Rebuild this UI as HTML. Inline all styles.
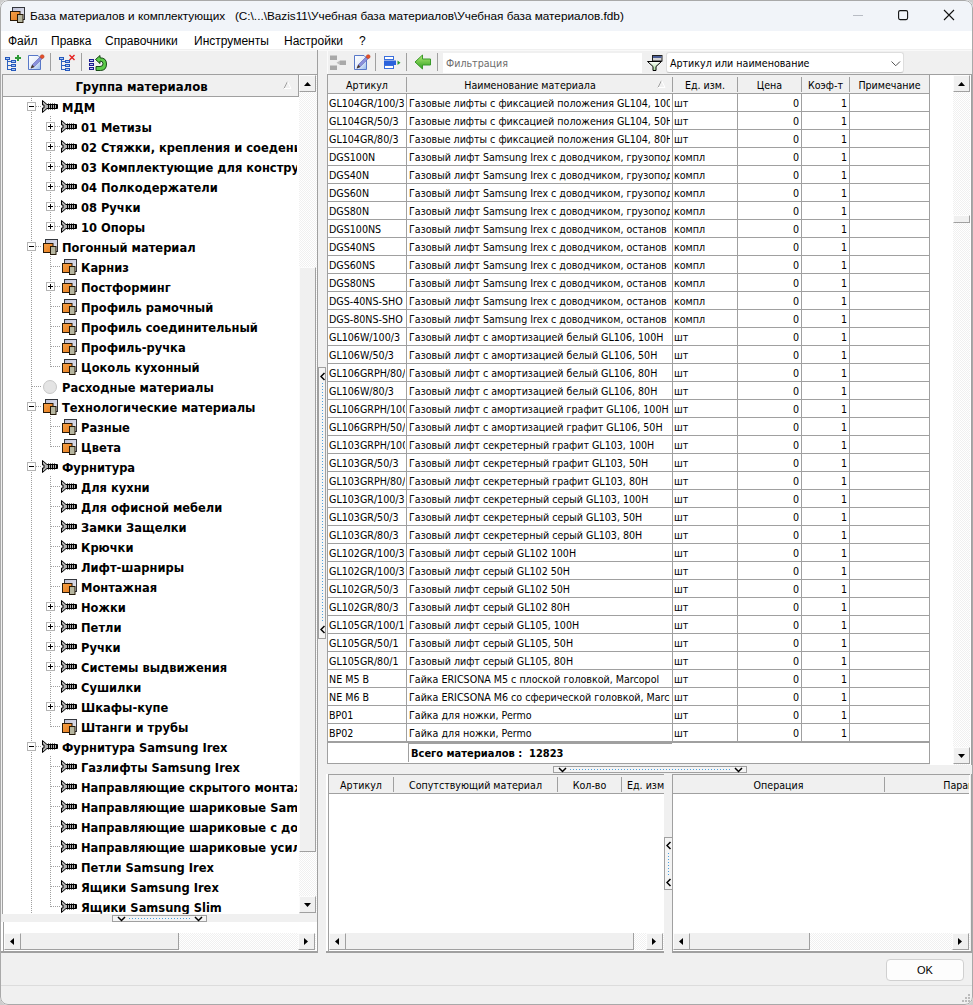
<!DOCTYPE html>
<html lang="ru"><head><meta charset="utf-8"><title>База материалов и комплектующих</title>
<style>
html,body{margin:0;padding:0}
body{width:973px;height:1005px;position:relative;overflow:hidden;background:#cdcdcd;font-family:"Liberation Sans",sans-serif;font-size:11px;color:#000}
.tah,.hdr,.grid{font-family:"DejaVu Sans Condensed","Liberation Sans",sans-serif;font-size:10.6px}
div,span,i,b,u,s,svg{position:absolute;box-sizing:border-box;font-style:normal;text-decoration:none;font-weight:normal}
.win{left:0;top:0;width:973px;height:1005px;background:#f0f0f0;border-radius:8px;overflow:hidden}
.winb{left:0;top:0;width:973px;height:1005px;border:1px solid #a9a9a9;border-radius:8px;pointer-events:none}
.title{left:0;top:0;width:973px;height:31px;background:#f1f4f9}
.title .cap{left:30px;top:8px;font-size:11.75px;line-height:16px;white-space:pre;color:#000}
.menu{left:0;top:31px;width:973px;height:18px;background:#fff}
.menu span{top:2px;font-size:12px;line-height:16px;white-space:nowrap}
.ln{background:#a0a0a0}
.sb{background:repeating-conic-gradient(#fff 0 25%,#f0f0f0 0 50%) 0 0/2px 2px}
.btn{background:#f0f0f0;border-right:1px solid #a0a0a0;border-bottom:1px solid #a0a0a0;border-left:1px solid #fcfcfc;border-top:1px solid #fcfcfc}
.thumb{background:#f0f0f0;border-right:1px solid #a0a0a0;border-bottom:1px solid #a0a0a0}
.ar{background:#000}
.ar.up{width:7px;height:4px;clip-path:polygon(50% 0,100% 100%,0 100%)}
.ar.dn{width:7px;height:4px;clip-path:polygon(0 0,100% 0,50% 100%)}
.ar.lf{width:4px;height:7px;clip-path:polygon(100% 0,100% 100%,0 50%)}
.ar.rt{width:4px;height:7px;clip-path:polygon(0 0,100% 50%,0 100%)}
.hdr{background:#f0f0f0;line-height:13px;white-space:nowrap;text-align:center}
.tsep{width:1px;height:18px;background:#a0a0a0;top:53px}
/* tree */
.tree{left:3px;top:97px;width:294px;height:817px;background:#fff;overflow:hidden}
.tree .tx{font-family:"DejaVu Sans Condensed","Liberation Sans",sans-serif;font-weight:bold;font-size:12.75px;line-height:20px;height:20px;white-space:nowrap;padding-top:1px}
.tree .vl{width:1px;background:repeating-linear-gradient(to bottom,#a0a0a0 0 1px,transparent 1px 2px)}
.tree .hl{height:1px;background:repeating-linear-gradient(to right,#a0a0a0 0 1px,transparent 1px 2px)}
.tree .ex{width:9px;height:9px;border:1px solid #b4b4b4;background:#fff}
.tree .ex u{left:1px;top:3px;width:5px;height:1px;background:#000}
.tree .ex s{left:3px;top:1px;width:1px;height:5px;background:#000}
/* grid */
.grid{left:328px;top:94px;width:602px;height:648px;background:#fff;overflow:hidden}
.grid .r{left:0;width:602px;height:18px;border-bottom:1px solid #a0a0a0;line-height:17px;white-space:nowrap}
.grid .r span{top:0;height:17px;overflow:hidden;padding-top:1px}
.grid .v{top:0;width:1px;height:648px;background:#a0a0a0}
.c1{left:1px;width:76px}
.c2{left:81px;width:261px}
.c3{left:346px;width:62px}
.c4{left:410px;width:61px;text-align:right}
.c5{left:474px;width:45px;text-align:right}
.c6{left:522px;width:79px}

</style></head>
<body>
<svg width="0" height="0" style="position:absolute"><defs>
<linearGradient id="gb" x1="0" y1="0" x2="1" y2="1"><stop offset="0" stop-color="#b9bdd6"/><stop offset="1" stop-color="#ececf2"/></linearGradient>
<linearGradient id="go" x1="0" y1="0" x2="1" y2="1"><stop offset="0" stop-color="#f6a24a"/><stop offset="1" stop-color="#e47a1c"/></linearGradient>
<symbol id="box" viewBox="0 0 16 16"><rect x="2.5" y="0.5" width="12" height="12" fill="url(#gb)" stroke="#33363c"/><rect x="0.5" y="4.5" width="9.5" height="9" fill="url(#go)" stroke="#2a1a08"/><rect x="7.5" y="7.5" width="5.5" height="8" fill="#b6b6a0" stroke="#241808"/></symbol>
<symbol id="screw" viewBox="0 0 16 13"><path d="M0.5 0.5 L5 4.5 H15.5 V8.5 H5 L0.5 12.5 V8 H2 V5 H0.5 Z" fill="#b0b0b0" stroke="#000" stroke-width="1"/><path d="M6.5 3.5 V9.5 M8.5 3.5 V9.5 M10.5 3.5 V9.5 M12.5 3.5 V9.5 M14.5 4 V9" stroke="#000" stroke-width="1"/></symbol>
<symbol id="circ" viewBox="0 0 16 16"><circle cx="8" cy="8" r="6.5" fill="#e4e4e4" stroke="#c8c8c8"/></symbol>

<linearGradient id="gpg" x1="0" y1="0" x2="1" y2="1"><stop offset="0" stop-color="#ffffff"/><stop offset="0.55" stop-color="#e6eefa"/><stop offset="1" stop-color="#8fb6ea"/></linearGradient>
<linearGradient id="ggr" x1="0" y1="0" x2="0" y2="1"><stop offset="0" stop-color="#b4ec78"/><stop offset="1" stop-color="#2ea01e"/></linearGradient>
<linearGradient id="gfn" x1="0" y1="0" x2="0" y2="1"><stop offset="0" stop-color="#ffffff"/><stop offset="1" stop-color="#a8dc98"/></linearGradient>
<symbol id="node" viewBox="0 0 6 3"><rect x="0.5" y="0.5" width="5" height="2" fill="#7fa8e8" stroke="#1f4fae"/></symbol>
<symbol id="tb-tree" viewBox="0 0 17 17"><path d="M2.5 5 V16 M2.5 7.5 H6 M2.5 11.5 H6 M2.5 15.5 H6" stroke="#2d62c0" fill="none"/><rect x="0" y="3" width="5" height="3" fill="#2558bc"/><rect x="1" y="4" width="3" height="1" fill="#a8c8f4"/><rect x="6" y="6" width="5" height="3" fill="#2558bc"/><rect x="7" y="7" width="3" height="1" fill="#a8c8f4"/><rect x="6" y="10" width="5" height="3" fill="#2558bc"/><rect x="7" y="11" width="3" height="1" fill="#a8c8f4"/><rect x="6" y="14" width="5" height="3" fill="#2558bc"/><rect x="7" y="15" width="3" height="1" fill="#a8c8f4"/></symbol>
<symbol id="tb-add" viewBox="0 0 17 17"><use href="#tb-tree"/><path d="M13 1 V7 M10 4 H16" stroke="#2c9a34" stroke-width="2"/></symbol>
<symbol id="tb-del" viewBox="0 0 17 17"><use href="#tb-tree" x="1"/><path d="M11.5 1 L16.5 6 M16.5 1 L11.5 6" stroke="#e42020" stroke-width="1.4"/></symbol>
<symbol id="tb-edit" viewBox="0 0 18 17"><path d="M1.5 1.5 H11 L13.5 4 V15.5 H1.5 Z" fill="url(#gpg)" stroke="#5878c8"/><path d="M4 14.2 L5.4 10.6 L13.4 2.6 L15.4 4.6 L7.4 12.6 Z" fill="#8890dc" stroke="#5a5aa8" stroke-width="0.5"/><path d="M3.6 14.6 L5.2 10.8 L7.4 13 Z" fill="#4a3a28"/><circle cx="15.2" cy="2.6" r="1.9" fill="#e8502a" stroke="#b03818" stroke-width="0.5"/></symbol>
<symbol id="tb-ref" viewBox="0 0 18 16"><rect x="0" y="4" width="5" height="3" fill="#1c1c90"/><rect x="1" y="5" width="3" height="1" fill="#c0c6f6"/><rect x="0" y="8" width="5" height="3" fill="#1c1c90"/><rect x="1" y="9" width="3" height="1" fill="#c0c6f6"/><rect x="0" y="12" width="5" height="3" fill="#1c1c90"/><rect x="1" y="13" width="3" height="1" fill="#c0c6f6"/><path d="M11 0.5 L6.5 4.5 L11 8.5 V6 Q14 6 14 8.8 Q14 11.5 11 11.5 H7 V15.5 H11.5 Q17.5 15.5 17.5 9 Q17.5 2.8 11 2.8 Z" fill="#5ccc4a" stroke="#083808" stroke-width="0.9"/></symbol>
<symbol id="tb-tree-gray" viewBox="0 0 17 17"><rect x="0" y="1.5" width="7" height="4.5" fill="#a9a9a9"/><rect x="0" y="11.5" width="7" height="4.5" fill="#a9a9a9"/><rect x="10" y="6.5" width="6" height="4.5" fill="#a9a9a9"/><path d="M10 6.5 V11 L6.5 8.75 Z" fill="#bdbdbd"/></symbol>
<symbol id="tb-move" viewBox="0 0 18 16"><rect x="1.5" y="1.5" width="9" height="3" fill="#fff" stroke="#3a6edc"/><rect x="1.5" y="10.5" width="9" height="3" fill="#fff" stroke="#3a6edc"/><rect x="1" y="5.5" width="12" height="4.5" fill="#2a62dc"/><path d="M14.5 5.5 L17.5 7.75 L14.5 10 Z" fill="#2c9a34"/></symbol>
<symbol id="tb-back" viewBox="0 0 18 17"><path d="M1 8 L8.5 1 V5 H16.5 V11 H8.5 V15 Z" fill="url(#ggr)" stroke="#3a9a2a"/></symbol>
<symbol id="tb-filter" viewBox="0 0 18 18"><rect x="6.5" y="1.5" width="9.5" height="5.5" fill="#d4d4d4" stroke="#202020"/><rect x="7" y="2" width="8.5" height="2" fill="#4a5c94"/><path d="M1.5 7.5 H15.5 L10 12.5 V16.5 H7 V12.5 Z" fill="url(#gfn)" stroke="#000"/></symbol>
</defs></svg>
<div class="win">
<div class="title">
<svg style="left:10px;top:7px" width="16" height="16"><use href="#box"/></svg>
<span class="cap">База материалов и комплектующих   (C:\...\Bazis11\Учебная база материалов\Учебная база материалов.fdb)</span>
<svg style="left:852px;top:9px" width="12" height="12"><path d="M1 6.5H11" stroke="#b8bcc4" stroke-width="1"/></svg>
<svg style="left:897px;top:9px" width="12" height="12"><rect x="1.6" y="1.6" width="9" height="9" rx="1.5" fill="none" stroke="#111" stroke-width="1.1"/></svg>
<svg style="left:943px;top:9px" width="12" height="12"><path d="M1 1L11 11M11 1L1 11" stroke="#111" stroke-width="1.1"/></svg>
</div>
<div class="menu"><span style="left:8px">Файл</span><span style="left:51px">Правка</span><span style="left:105px">Справочники</span><span style="left:194px">Инструменты</span><span style="left:284px">Настройки</span><span style="left:359px">?</span></div>

<i style="left:0;top:50px;width:973px;height:1px;background:#f9f9f9"></i>
<!-- left toolbar -->
<svg style="left:5px;top:54px" width="17" height="17"><use href="#tb-add"/></svg>
<svg style="left:27px;top:54px" width="18" height="17"><use href="#tb-edit"/></svg>
<i class="tsep" style="left:50px"></i>
<svg style="left:58px;top:54px" width="17" height="17"><use href="#tb-del"/></svg>
<i class="tsep" style="left:81px"></i>
<svg style="left:89px;top:55px" width="18" height="16"><use href="#tb-ref"/></svg>

<!-- left panel frame -->
<i class="ln" style="left:2px;top:74px;width:316px;height:1px"></i>
<i class="ln" style="left:2px;top:74px;width:1px;height:840px"></i>
<i class="ln" style="left:317px;top:50px;width:1px;height:903px"></i>
<i style="left:1px;top:922px;width:2px;height:29px;background:#fff"></i>
<i class="ln" style="left:3px;top:922px;width:1px;height:30px"></i>
<i class="ln" style="left:1px;top:951px;width:317px;height:2px"></i>
<div class="hdr" style="left:3px;top:75px;width:296px;height:22px;border-right:1px solid #a0a0a0;border-bottom:1px solid #a0a0a0;font-family:'DejaVu Sans Condensed','Liberation Sans',sans-serif;font-weight:bold;font-size:13px;line-height:23px;padding-right:18px">Группа материалов</div>
<svg style="left:283px;top:81px" width="9" height="9"><path d="M1 7.5 L4.5 0.5" stroke="#a0a0a0" fill="none"/><path d="M4.5 0.5 L8 7.5 L1 7.5" stroke="#fff" fill="none"/></svg>
<i style="left:297px;top:97px;width:2px;height:817px;background:#fff"></i>
<!-- tree vscroll -->
<div class="sb" style="left:299px;top:75px;width:18px;height:838px"></div>
<div class="btn" style="left:299px;top:75px;width:17px;height:17px"><i class="ar up" style="left:4px;top:6px"></i></div>
<div class="thumb" style="left:299px;top:267px;width:17px;height:585px;border-left:1px solid #fcfcfc;border-top:1px solid #fcfcfc"></div>
<div class="btn" style="left:299px;top:896px;width:17px;height:17px"><i class="ar dn" style="left:4px;top:6px"></i></div>
<!-- left h-splitter handle -->
<div style="left:112px;top:915px;width:95px;height:7px;border:1px solid #a0a0a0;background:#f4f4f4"><svg style="left:4px;top:0px" width="9" height="6"><path d="M1 1L4.5 4.5L8 1" stroke="#000" stroke-width="1.5" fill="none"/></svg><i style="left:16px;top:2px;width:62px;height:1px;background:repeating-linear-gradient(to right,#4aa0e0 0 1px,transparent 1px 3px)"></i><svg style="left:81px;top:0px" width="9" height="6"><path d="M1 1L4.5 4.5L8 1" stroke="#000" stroke-width="1.5" fill="none"/></svg></div>
<div style="left:4px;top:922px;width:313px;height:29px;background:#fff"></div>
<!-- left hscroll -->
<div class="sb" style="left:4px;top:933px;width:312px;height:17px"></div>
<div class="btn" style="left:4px;top:933px;width:17px;height:17px"><i class="ar lf" style="left:5px;top:4px"></i></div>
<div class="thumb" style="left:21px;top:933px;width:158px;height:17px"></div>
<div class="btn" style="left:298px;top:933px;width:17px;height:17px"><i class="ar rt" style="left:5px;top:4px"></i></div>

<!-- v splitter between panels -->
<div style="left:318px;top:367px;width:8px;height:272px;border:1px solid #a0a0a0;background:#f4f4f4"><svg style="left:1px;top:4px" width="6" height="9"><path d="M4.5 1L1 4.5L4.5 8" stroke="#000" stroke-width="1.5" fill="none"/></svg><i style="left:3px;top:15px;width:1px;height:240px;background:repeating-linear-gradient(to bottom,#4aa0e0 0 1px,transparent 1px 3px)"></i><svg style="left:1px;top:257px" width="6" height="9"><path d="M4.5 1L1 4.5L4.5 8" stroke="#000" stroke-width="1.5" fill="none"/></svg></div>

<!-- right toolbar -->
<i style="left:327px;top:51px;width:1px;height:23px;background:#fbfbfb"></i>
<svg style="left:330px;top:54px" width="17" height="17"><use href="#tb-tree-gray"/></svg>
<svg style="left:353px;top:54px" width="18" height="17"><use href="#tb-edit"/></svg>
<i class="tsep" style="left:375px"></i>
<svg style="left:383px;top:55px" width="18" height="16"><use href="#tb-move"/></svg>
<i class="tsep" style="left:406px"></i>
<svg style="left:414px;top:54px" width="18" height="17"><use href="#tb-back"/></svg>
<i class="tsep" style="left:437px"></i>
<div style="left:443px;top:53px;width:199px;height:20px;background:#fff;line-height:20px;padding-left:3px;color:#6d6d6d" class="tah">Фильтрация</div>
<svg style="left:646px;top:54px" width="18" height="18"><use href="#tb-filter"/></svg>
<div style="left:666px;top:52px;width:238px;height:21px;background:#fff;border:1px solid #dedede;border-bottom-color:#c4c4c4;border-radius:3px;line-height:20px;padding-left:3px" class="tah">Артикул или наименование<svg style="left:224px;top:8px" width="10" height="6"><path d="M0.5 0.5L4.75 4.75L9 0.5" stroke="#555" stroke-width="1" fill="none"/></svg></div>

<!-- right panel frame -->
<i class="ln" style="left:327px;top:74px;width:645px;height:1px"></i>
<i class="ln" style="left:327px;top:74px;width:1px;height:690px"></i>
<i class="ln" style="left:971px;top:74px;width:1px;height:691px"></i>
<div style="left:328px;top:75px;width:643px;height:690px;background:#fff"></div>
<i class="ln" style="left:327px;top:763px;width:603px;height:1px"></i><i style="left:327px;top:764px;width:603px;height:1px;background:#f0f0f0"></i>
<!-- grid header -->
<div class="hdr" style="left:328px;top:75px;width:602px;height:19px;border-bottom:1px solid #a0a0a0;border-right:1px solid #a0a0a0">
<span style="left:0;width:78px;top:4px">Артикул</span><i class="ln" style="left:78px;top:2px;width:1px;height:15px"></i>
<span style="left:79px;width:246px;top:4px">Наименование материала</span><i class="ln" style="left:344px;top:2px;width:1px;height:15px"></i>
<span style="left:345px;width:64px;top:4px">Ед. изм.</span><i class="ln" style="left:409px;top:2px;width:1px;height:15px"></i>
<span style="left:410px;width:63px;top:4px">Цена</span><i class="ln" style="left:473px;top:2px;width:1px;height:15px"></i>
<span style="left:474px;width:47px;top:4px">Коэф-т</span><i class="ln" style="left:521px;top:2px;width:1px;height:15px"></i>
<span style="left:522px;width:79px;top:4px">Примечание</span>
<svg style="left:329px;top:5px" width="9" height="9"><path d="M1 7.5 L4.5 0.5" stroke="#a0a0a0" fill="none"/><path d="M4.5 0.5 L8 7.5 L1 7.5" stroke="#fff" fill="none"/></svg>
</div>
<!-- grid vscroll -->
<div class="sb" style="left:953px;top:75px;width:17px;height:690px"></div>
<div class="btn" style="left:953px;top:75px;width:17px;height:17px"><i class="ar up" style="left:4px;top:6px"></i></div>
<div class="thumb" style="left:953px;top:215px;width:17px;height:8px;border-left:1px solid #fcfcfc;border-top:1px solid #fcfcfc"></div>
<div class="btn" style="left:953px;top:747px;width:17px;height:17px"><i class="ar dn" style="left:4px;top:6px"></i></div>
<!-- footer -->
<i class="ln" style="left:328px;top:742px;width:602px;height:1px"></i>
<i class="ln" style="left:929px;top:742px;width:1px;height:21px"></i>
<i class="ln" style="left:408px;top:743px;width:264px;height:1px"></i>
<i class="ln" style="left:408px;top:743px;width:1px;height:19px"></i>
<span style="left:411px;top:747px;font-weight:bold;line-height:14px;white-space:pre;font-size:11px" class="tah">Всего материалов :  12823</span>

<!-- middle h-splitter handle -->
<div style="left:553px;top:766px;width:194px;height:7px;border:1px solid #a0a0a0;background:#f4f4f4"><svg style="left:4px;top:0px" width="9" height="6"><path d="M1 1L4.5 4.5L8 1" stroke="#000" stroke-width="1.5" fill="none"/></svg><i style="left:16px;top:2px;width:160px;height:1px;background:repeating-linear-gradient(to right,#4aa0e0 0 1px,transparent 1px 3px)"></i><svg style="left:180px;top:0px" width="9" height="6"><path d="M1 1L4.5 4.5L8 1" stroke="#000" stroke-width="1.5" fill="none"/></svg></div>

<!-- bottom-left grid -->
<i style="left:326px;top:774px;width:2px;height:177px;background:#fff"></i>
<i class="ln" style="left:328px;top:774px;width:336px;height:1px"></i>
<i class="ln" style="left:328px;top:774px;width:1px;height:178px"></i>
<i class="ln" style="left:326px;top:951px;width:338px;height:2px"></i>
<div style="left:329px;top:775px;width:335px;height:176px;background:#fff"></div>
<div class="hdr" style="left:329px;top:775px;width:335px;height:19px;overflow:hidden;border-bottom:1px solid #a0a0a0">
<span style="left:0;width:64px;top:4px">Артикул</span><i class="ln" style="left:64px;top:2px;width:1px;height:15px"></i>
<span style="left:65px;width:163px;top:4px">Сопутствующий материал</span><i class="ln" style="left:228px;top:2px;width:1px;height:15px"></i>
<span style="left:229px;width:63px;top:4px">Кол-во</span><i class="ln" style="left:292px;top:2px;width:1px;height:15px"></i>
<span style="left:298px;top:4px">Ед. изм.</span>
</div>
<div class="sb" style="left:329px;top:933px;width:335px;height:17px"></div>
<div class="btn" style="left:329px;top:933px;width:17px;height:17px"><i class="ar lf" style="left:5px;top:4px"></i></div>
<div class="thumb" style="left:346px;top:933px;width:288px;height:17px"></div>
<div class="btn" style="left:646px;top:933px;width:17px;height:17px"><i class="ar rt" style="left:5px;top:4px"></i></div>
<!-- bottom v-splitter handle -->
<div style="left:664px;top:837px;width:8px;height:53px;border:1px solid #a0a0a0;border-right:0;background:#f4f4f4"><svg style="left:1px;top:3px" width="6" height="9"><path d="M4.5 1L1 4.5L4.5 8" stroke="#000" stroke-width="1.5" fill="none"/></svg><i style="left:3px;top:15px;width:1px;height:22px;background:repeating-linear-gradient(to bottom,#4aa0e0 0 1px,transparent 1px 3px)"></i><svg style="left:1px;top:40px" width="6" height="9"><path d="M4.5 1L1 4.5L4.5 8" stroke="#000" stroke-width="1.5" fill="none"/></svg></div>
<!-- bottom-right grid -->
<i class="ln" style="left:672px;top:774px;width:298px;height:1px"></i>
<i class="ln" style="left:672px;top:774px;width:1px;height:178px"></i>
<i class="ln" style="left:971px;top:774px;width:1px;height:178px"></i>
<i class="ln" style="left:672px;top:951px;width:300px;height:2px"></i>
<div style="left:673px;top:775px;width:297px;height:176px;background:#fff"></div>
<div class="hdr" style="left:673px;top:775px;width:296px;height:19px;overflow:hidden;border-bottom:1px solid #a0a0a0">
<span style="left:0;width:211px;top:4px">Операция</span><i class="ln" style="left:211px;top:2px;width:1px;height:15px"></i>
<span style="left:210px;width:170px;top:4px">Параметр</span>
</div>
<div class="sb" style="left:673px;top:933px;width:297px;height:17px"></div>
<div class="btn" style="left:673px;top:933px;width:17px;height:17px"><i class="ar lf" style="left:5px;top:4px"></i></div>
<div class="thumb" style="left:690px;top:933px;width:120px;height:17px"></div>
<div class="btn" style="left:952px;top:933px;width:17px;height:17px"><i class="ar rt" style="left:5px;top:4px"></i></div>

<!-- bottom bar -->
<div style="left:886px;top:959px;width:78px;height:22px;background:#fdfdfd;border:1px solid #d0d0d0;border-radius:4px;text-align:center;font-size:11px;line-height:20px">OK</div>
<i style="left:0;top:985px;width:973px;height:1px;background:#dcdcdc"></i>
<svg style="left:961px;top:993px" width="10" height="10"><rect x="7" y="1" width="2" height="2" fill="#bcbcbc"/><rect x="4" y="4" width="2" height="2" fill="#bcbcbc"/><rect x="7" y="4" width="2" height="2" fill="#bcbcbc"/><rect x="1" y="7" width="2" height="2" fill="#bcbcbc"/><rect x="4" y="7" width="2" height="2" fill="#bcbcbc"/><rect x="7" y="7" width="2" height="2" fill="#bcbcbc"/></svg>
<div class="winb"></div>
</div>
<div class="tree">
<i class="vl" style="left:28px;top:1px;height:816px"></i>
<i class="vl" style="left:47px;top:19px;height:111px"></i>
<i class="vl" style="left:47px;top:159px;height:111px"></i>
<i class="vl" style="left:47px;top:319px;height:31px"></i>
<i class="vl" style="left:47px;top:379px;height:251px"></i>
<i class="vl" style="left:47px;top:659px;height:151px"></i>
<i class="hl" style="left:33px;top:9px;width:5px"></i>
<b class="ex" style="left:24px;top:5px"><u></u></b>
<svg class="ic" style="left:39px;top:3px" width="16" height="13"><use href="#screw"/></svg>
<span class="tx" style="left:59px;top:0px">МДМ</span>
<i class="hl" style="left:52px;top:29px;width:5px"></i>
<b class="ex" style="left:43px;top:25px"><u></u><s></s></b>
<svg class="ic" style="left:58px;top:23px" width="16" height="13"><use href="#screw"/></svg>
<span class="tx" style="left:78px;top:20px">01 Метизы</span>
<i class="hl" style="left:52px;top:49px;width:5px"></i>
<b class="ex" style="left:43px;top:45px"><u></u><s></s></b>
<svg class="ic" style="left:58px;top:43px" width="16" height="13"><use href="#screw"/></svg>
<span class="tx" style="left:78px;top:40px">02 Стяжки, крепления и соеденители</span>
<i class="hl" style="left:52px;top:69px;width:5px"></i>
<b class="ex" style="left:43px;top:65px"><u></u><s></s></b>
<svg class="ic" style="left:58px;top:63px" width="16" height="13"><use href="#screw"/></svg>
<span class="tx" style="left:78px;top:60px">03 Комплектующие для конструкций</span>
<i class="hl" style="left:52px;top:89px;width:5px"></i>
<b class="ex" style="left:43px;top:85px"><u></u><s></s></b>
<svg class="ic" style="left:58px;top:83px" width="16" height="13"><use href="#screw"/></svg>
<span class="tx" style="left:78px;top:80px">04 Полкодержатели</span>
<i class="hl" style="left:52px;top:109px;width:5px"></i>
<b class="ex" style="left:43px;top:105px"><u></u><s></s></b>
<svg class="ic" style="left:58px;top:103px" width="16" height="13"><use href="#screw"/></svg>
<span class="tx" style="left:78px;top:100px">08 Ручки</span>
<i class="hl" style="left:52px;top:129px;width:5px"></i>
<b class="ex" style="left:43px;top:125px"><u></u><s></s></b>
<svg class="ic" style="left:58px;top:123px" width="16" height="13"><use href="#screw"/></svg>
<span class="tx" style="left:78px;top:120px">10 Опоры</span>
<i class="hl" style="left:33px;top:149px;width:5px"></i>
<b class="ex" style="left:24px;top:145px"><u></u></b>
<svg class="ic" style="left:40px;top:142px" width="16" height="16"><use href="#box"/></svg>
<span class="tx" style="left:59px;top:140px">Погонный материал</span>
<i class="hl" style="left:48px;top:169px;width:10px"></i>
<svg class="ic" style="left:59px;top:162px" width="16" height="16"><use href="#box"/></svg>
<span class="tx" style="left:78px;top:160px">Карниз</span>
<i class="hl" style="left:52px;top:189px;width:5px"></i>
<b class="ex" style="left:43px;top:185px"><u></u><s></s></b>
<svg class="ic" style="left:59px;top:182px" width="16" height="16"><use href="#box"/></svg>
<span class="tx" style="left:78px;top:180px">Постформинг</span>
<i class="hl" style="left:48px;top:209px;width:10px"></i>
<svg class="ic" style="left:59px;top:202px" width="16" height="16"><use href="#box"/></svg>
<span class="tx" style="left:78px;top:200px">Профиль рамочный</span>
<i class="hl" style="left:48px;top:229px;width:10px"></i>
<svg class="ic" style="left:59px;top:222px" width="16" height="16"><use href="#box"/></svg>
<span class="tx" style="left:78px;top:220px">Профиль соединительный</span>
<i class="hl" style="left:48px;top:249px;width:10px"></i>
<svg class="ic" style="left:59px;top:242px" width="16" height="16"><use href="#box"/></svg>
<span class="tx" style="left:78px;top:240px">Профиль-ручка</span>
<i class="hl" style="left:48px;top:269px;width:10px"></i>
<svg class="ic" style="left:59px;top:262px" width="16" height="16"><use href="#box"/></svg>
<span class="tx" style="left:78px;top:260px">Цоколь кухонный</span>
<i class="hl" style="left:29px;top:289px;width:10px"></i>
<svg class="ic" style="left:39px;top:282px" width="16" height="16"><use href="#circ"/></svg>
<span class="tx" style="left:59px;top:280px">Расходные материалы</span>
<i class="hl" style="left:33px;top:309px;width:5px"></i>
<b class="ex" style="left:24px;top:305px"><u></u></b>
<svg class="ic" style="left:40px;top:302px" width="16" height="16"><use href="#box"/></svg>
<span class="tx" style="left:59px;top:300px">Технологические материалы</span>
<i class="hl" style="left:48px;top:329px;width:10px"></i>
<svg class="ic" style="left:59px;top:322px" width="16" height="16"><use href="#box"/></svg>
<span class="tx" style="left:78px;top:320px">Разные</span>
<i class="hl" style="left:48px;top:349px;width:10px"></i>
<svg class="ic" style="left:59px;top:342px" width="16" height="16"><use href="#box"/></svg>
<span class="tx" style="left:78px;top:340px">Цвета</span>
<i class="hl" style="left:33px;top:369px;width:5px"></i>
<b class="ex" style="left:24px;top:365px"><u></u></b>
<svg class="ic" style="left:39px;top:363px" width="16" height="13"><use href="#screw"/></svg>
<span class="tx" style="left:59px;top:360px">Фурнитура</span>
<i class="hl" style="left:48px;top:389px;width:10px"></i>
<svg class="ic" style="left:58px;top:383px" width="16" height="13"><use href="#screw"/></svg>
<span class="tx" style="left:78px;top:380px">Для кухни</span>
<i class="hl" style="left:48px;top:409px;width:10px"></i>
<svg class="ic" style="left:58px;top:403px" width="16" height="13"><use href="#screw"/></svg>
<span class="tx" style="left:78px;top:400px">Для офисной мебели</span>
<i class="hl" style="left:48px;top:429px;width:10px"></i>
<svg class="ic" style="left:58px;top:423px" width="16" height="13"><use href="#screw"/></svg>
<span class="tx" style="left:78px;top:420px">Замки Защелки</span>
<i class="hl" style="left:48px;top:449px;width:10px"></i>
<svg class="ic" style="left:58px;top:443px" width="16" height="13"><use href="#screw"/></svg>
<span class="tx" style="left:78px;top:440px">Крючки</span>
<i class="hl" style="left:48px;top:469px;width:10px"></i>
<svg class="ic" style="left:58px;top:463px" width="16" height="13"><use href="#screw"/></svg>
<span class="tx" style="left:78px;top:460px">Лифт-шарниры</span>
<i class="hl" style="left:48px;top:489px;width:10px"></i>
<svg class="ic" style="left:59px;top:482px" width="16" height="16"><use href="#box"/></svg>
<span class="tx" style="left:78px;top:480px">Монтажная</span>
<i class="hl" style="left:52px;top:509px;width:5px"></i>
<b class="ex" style="left:43px;top:505px"><u></u><s></s></b>
<svg class="ic" style="left:58px;top:503px" width="16" height="13"><use href="#screw"/></svg>
<span class="tx" style="left:78px;top:500px">Ножки</span>
<i class="hl" style="left:52px;top:529px;width:5px"></i>
<b class="ex" style="left:43px;top:525px"><u></u><s></s></b>
<svg class="ic" style="left:58px;top:523px" width="16" height="13"><use href="#screw"/></svg>
<span class="tx" style="left:78px;top:520px">Петли</span>
<i class="hl" style="left:52px;top:549px;width:5px"></i>
<b class="ex" style="left:43px;top:545px"><u></u><s></s></b>
<svg class="ic" style="left:58px;top:543px" width="16" height="13"><use href="#screw"/></svg>
<span class="tx" style="left:78px;top:540px">Ручки</span>
<i class="hl" style="left:52px;top:569px;width:5px"></i>
<b class="ex" style="left:43px;top:565px"><u></u><s></s></b>
<svg class="ic" style="left:58px;top:563px" width="16" height="13"><use href="#screw"/></svg>
<span class="tx" style="left:78px;top:560px">Системы выдвижения</span>
<i class="hl" style="left:48px;top:589px;width:10px"></i>
<svg class="ic" style="left:58px;top:583px" width="16" height="13"><use href="#screw"/></svg>
<span class="tx" style="left:78px;top:580px">Сушилки</span>
<i class="hl" style="left:52px;top:609px;width:5px"></i>
<b class="ex" style="left:43px;top:605px"><u></u><s></s></b>
<svg class="ic" style="left:58px;top:603px" width="16" height="13"><use href="#screw"/></svg>
<span class="tx" style="left:78px;top:600px">Шкафы-купе</span>
<i class="hl" style="left:48px;top:629px;width:10px"></i>
<svg class="ic" style="left:59px;top:622px" width="16" height="16"><use href="#box"/></svg>
<span class="tx" style="left:78px;top:620px">Штанги и трубы</span>
<i class="hl" style="left:33px;top:649px;width:5px"></i>
<b class="ex" style="left:24px;top:645px"><u></u></b>
<svg class="ic" style="left:39px;top:643px" width="16" height="13"><use href="#screw"/></svg>
<span class="tx" style="left:59px;top:640px">Фурнитура Samsung Irex</span>
<i class="hl" style="left:48px;top:669px;width:10px"></i>
<svg class="ic" style="left:58px;top:663px" width="16" height="13"><use href="#screw"/></svg>
<span class="tx" style="left:78px;top:660px">Газлифты Samsung Irex</span>
<i class="hl" style="left:48px;top:689px;width:10px"></i>
<svg class="ic" style="left:58px;top:683px" width="16" height="13"><use href="#screw"/></svg>
<span class="tx" style="left:78px;top:680px">Направляющие скрытого монтажа</span>
<i class="hl" style="left:48px;top:709px;width:10px"></i>
<svg class="ic" style="left:58px;top:703px" width="16" height="13"><use href="#screw"/></svg>
<span class="tx" style="left:78px;top:700px">Направляющие шариковые Samsung</span>
<i class="hl" style="left:48px;top:729px;width:10px"></i>
<svg class="ic" style="left:58px;top:723px" width="16" height="13"><use href="#screw"/></svg>
<span class="tx" style="left:78px;top:720px">Направляющие шариковые с доводчиком</span>
<i class="hl" style="left:48px;top:749px;width:10px"></i>
<svg class="ic" style="left:58px;top:743px" width="16" height="13"><use href="#screw"/></svg>
<span class="tx" style="left:78px;top:740px">Направляющие шариковые усиленные</span>
<i class="hl" style="left:48px;top:769px;width:10px"></i>
<svg class="ic" style="left:58px;top:763px" width="16" height="13"><use href="#screw"/></svg>
<span class="tx" style="left:78px;top:760px">Петли Samsung Irex</span>
<i class="hl" style="left:48px;top:789px;width:10px"></i>
<svg class="ic" style="left:58px;top:783px" width="16" height="13"><use href="#screw"/></svg>
<span class="tx" style="left:78px;top:780px">Ящики Samsung Irex</span>
<i class="hl" style="left:48px;top:809px;width:10px"></i>
<svg class="ic" style="left:58px;top:803px" width="16" height="13"><use href="#screw"/></svg>
<span class="tx" style="left:78px;top:800px">Ящики Samsung Slim</span>
</div><div class="grid">
<div class="r" style="top:0px"><span class="c1">GL104GR/100/3</span><span class="c2">Газовые лифты с фиксацией положения GL104, 100H</span><span class="c3">шт</span><span class="c4">0</span><span class="c5">1</span><span class="c6"></span></div>
<div class="r" style="top:18px"><span class="c1">GL104GR/50/3</span><span class="c2">Газовые лифты с фиксацией положения GL104, 50H</span><span class="c3">шт</span><span class="c4">0</span><span class="c5">1</span><span class="c6"></span></div>
<div class="r" style="top:36px"><span class="c1">GL104GR/80/3</span><span class="c2">Газовые лифты с фиксацией положения GL104, 80H</span><span class="c3">шт</span><span class="c4">0</span><span class="c5">1</span><span class="c6"></span></div>
<div class="r" style="top:54px"><span class="c1">DGS100N</span><span class="c2">Газовый лифт Samsung Irex с доводчиком, грузоподъемность</span><span class="c3">компл</span><span class="c4">0</span><span class="c5">1</span><span class="c6"></span></div>
<div class="r" style="top:72px"><span class="c1">DGS40N</span><span class="c2">Газовый лифт Samsung Irex с доводчиком, грузоподъемность</span><span class="c3">компл</span><span class="c4">0</span><span class="c5">1</span><span class="c6"></span></div>
<div class="r" style="top:90px"><span class="c1">DGS60N</span><span class="c2">Газовый лифт Samsung Irex с доводчиком, грузоподъемность</span><span class="c3">компл</span><span class="c4">0</span><span class="c5">1</span><span class="c6"></span></div>
<div class="r" style="top:108px"><span class="c1">DGS80N</span><span class="c2">Газовый лифт Samsung Irex с доводчиком, грузоподъемность</span><span class="c3">компл</span><span class="c4">0</span><span class="c5">1</span><span class="c6"></span></div>
<div class="r" style="top:126px"><span class="c1">DGS100NS</span><span class="c2">Газовый лифт Samsung Irex с доводчиком, останов</span><span class="c3">компл</span><span class="c4">0</span><span class="c5">1</span><span class="c6"></span></div>
<div class="r" style="top:144px"><span class="c1">DGS40NS</span><span class="c2">Газовый лифт Samsung Irex с доводчиком, останов</span><span class="c3">компл</span><span class="c4">0</span><span class="c5">1</span><span class="c6"></span></div>
<div class="r" style="top:162px"><span class="c1">DGS60NS</span><span class="c2">Газовый лифт Samsung Irex с доводчиком, останов</span><span class="c3">компл</span><span class="c4">0</span><span class="c5">1</span><span class="c6"></span></div>
<div class="r" style="top:180px"><span class="c1">DGS80NS</span><span class="c2">Газовый лифт Samsung Irex с доводчиком, останов</span><span class="c3">компл</span><span class="c4">0</span><span class="c5">1</span><span class="c6"></span></div>
<div class="r" style="top:198px"><span class="c1">DGS-40NS-SHO</span><span class="c2">Газовый лифт Samsung Irex с доводчиком, останов</span><span class="c3">компл</span><span class="c4">0</span><span class="c5">1</span><span class="c6"></span></div>
<div class="r" style="top:216px"><span class="c1">DGS-80NS-SHO</span><span class="c2">Газовый лифт Samsung Irex с доводчиком, останов</span><span class="c3">компл</span><span class="c4">0</span><span class="c5">1</span><span class="c6"></span></div>
<div class="r" style="top:234px"><span class="c1">GL106W/100/3</span><span class="c2">Газовый лифт с амортизацией белый GL106, 100H</span><span class="c3">шт</span><span class="c4">0</span><span class="c5">1</span><span class="c6"></span></div>
<div class="r" style="top:252px"><span class="c1">GL106W/50/3</span><span class="c2">Газовый лифт с амортизацией белый GL106, 50H</span><span class="c3">шт</span><span class="c4">0</span><span class="c5">1</span><span class="c6"></span></div>
<div class="r" style="top:270px"><span class="c1">GL106GRPH/80/3</span><span class="c2">Газовый лифт с амортизацией белый GL106, 80H</span><span class="c3">шт</span><span class="c4">0</span><span class="c5">1</span><span class="c6"></span></div>
<div class="r" style="top:288px"><span class="c1">GL106W/80/3</span><span class="c2">Газовый лифт с амортизацией белый GL106, 80H</span><span class="c3">шт</span><span class="c4">0</span><span class="c5">1</span><span class="c6"></span></div>
<div class="r" style="top:306px"><span class="c1">GL106GRPH/100/3</span><span class="c2">Газовый лифт с амортизацией графит GL106, 100H</span><span class="c3">шт</span><span class="c4">0</span><span class="c5">1</span><span class="c6"></span></div>
<div class="r" style="top:324px"><span class="c1">GL106GRPH/50/3</span><span class="c2">Газовый лифт с амортизацией графит GL106, 50H</span><span class="c3">шт</span><span class="c4">0</span><span class="c5">1</span><span class="c6"></span></div>
<div class="r" style="top:342px"><span class="c1">GL103GRPH/100/3</span><span class="c2">Газовый лифт секретерный графит GL103, 100H</span><span class="c3">шт</span><span class="c4">0</span><span class="c5">1</span><span class="c6"></span></div>
<div class="r" style="top:360px"><span class="c1">GL103GR/50/3</span><span class="c2">Газовый лифт секретерный графит GL103, 50H</span><span class="c3">шт</span><span class="c4">0</span><span class="c5">1</span><span class="c6"></span></div>
<div class="r" style="top:378px"><span class="c1">GL103GRPH/80/3</span><span class="c2">Газовый лифт секретерный графит GL103, 80H</span><span class="c3">шт</span><span class="c4">0</span><span class="c5">1</span><span class="c6"></span></div>
<div class="r" style="top:396px"><span class="c1">GL103GR/100/3</span><span class="c2">Газовый лифт секретерный серый GL103, 100H</span><span class="c3">шт</span><span class="c4">0</span><span class="c5">1</span><span class="c6"></span></div>
<div class="r" style="top:414px"><span class="c1">GL103GR/50/3</span><span class="c2">Газовый лифт секретерный серый GL103, 50H</span><span class="c3">шт</span><span class="c4">0</span><span class="c5">1</span><span class="c6"></span></div>
<div class="r" style="top:432px"><span class="c1">GL103GR/80/3</span><span class="c2">Газовый лифт секретерный серый GL103, 80H</span><span class="c3">шт</span><span class="c4">0</span><span class="c5">1</span><span class="c6"></span></div>
<div class="r" style="top:450px"><span class="c1">GL102GR/100/3</span><span class="c2">Газовый лифт серый GL102 100H</span><span class="c3">шт</span><span class="c4">0</span><span class="c5">1</span><span class="c6"></span></div>
<div class="r" style="top:468px"><span class="c1">GL102GR/100/3</span><span class="c2">Газовый лифт серый GL102 50H</span><span class="c3">шт</span><span class="c4">0</span><span class="c5">1</span><span class="c6"></span></div>
<div class="r" style="top:486px"><span class="c1">GL102GR/50/3</span><span class="c2">Газовый лифт серый GL102 50H</span><span class="c3">шт</span><span class="c4">0</span><span class="c5">1</span><span class="c6"></span></div>
<div class="r" style="top:504px"><span class="c1">GL102GR/80/3</span><span class="c2">Газовый лифт серый GL102 80H</span><span class="c3">шт</span><span class="c4">0</span><span class="c5">1</span><span class="c6"></span></div>
<div class="r" style="top:522px"><span class="c1">GL105GR/100/1</span><span class="c2">Газовый лифт серый GL105, 100H</span><span class="c3">шт</span><span class="c4">0</span><span class="c5">1</span><span class="c6"></span></div>
<div class="r" style="top:540px"><span class="c1">GL105GR/50/1</span><span class="c2">Газовый лифт серый GL105, 50H</span><span class="c3">шт</span><span class="c4">0</span><span class="c5">1</span><span class="c6"></span></div>
<div class="r" style="top:558px"><span class="c1">GL105GR/80/1</span><span class="c2">Газовый лифт серый GL105, 80H</span><span class="c3">шт</span><span class="c4">0</span><span class="c5">1</span><span class="c6"></span></div>
<div class="r" style="top:576px"><span class="c1">NE M5 B</span><span class="c2">Гайка ERICSONA M5 с плоской головкой, Marcopol</span><span class="c3">шт</span><span class="c4">0</span><span class="c5">1</span><span class="c6"></span></div>
<div class="r" style="top:594px"><span class="c1">NE M6 B</span><span class="c2">Гайка ERICSONA M6 со сферической головкой, Marcopol</span><span class="c3">шт</span><span class="c4">0</span><span class="c5">1</span><span class="c6"></span></div>
<div class="r" style="top:612px"><span class="c1">BP01</span><span class="c2">Гайка для ножки, Permo</span><span class="c3">шт</span><span class="c4">0</span><span class="c5">1</span><span class="c6"></span></div>
<div class="r" style="top:630px"><span class="c1">BP02</span><span class="c2">Гайка для ножки, Permo</span><span class="c3">шт</span><span class="c4">0</span><span class="c5">1</span><span class="c6"></span></div>
<i class="v" style="left:78px"></i>
<i class="v" style="left:344px"></i>
<i class="v" style="left:409px"></i>
<i class="v" style="left:473px"></i>
<i class="v" style="left:521px"></i>
<i class="v" style="left:601px"></i>
</div>
</body></html>
